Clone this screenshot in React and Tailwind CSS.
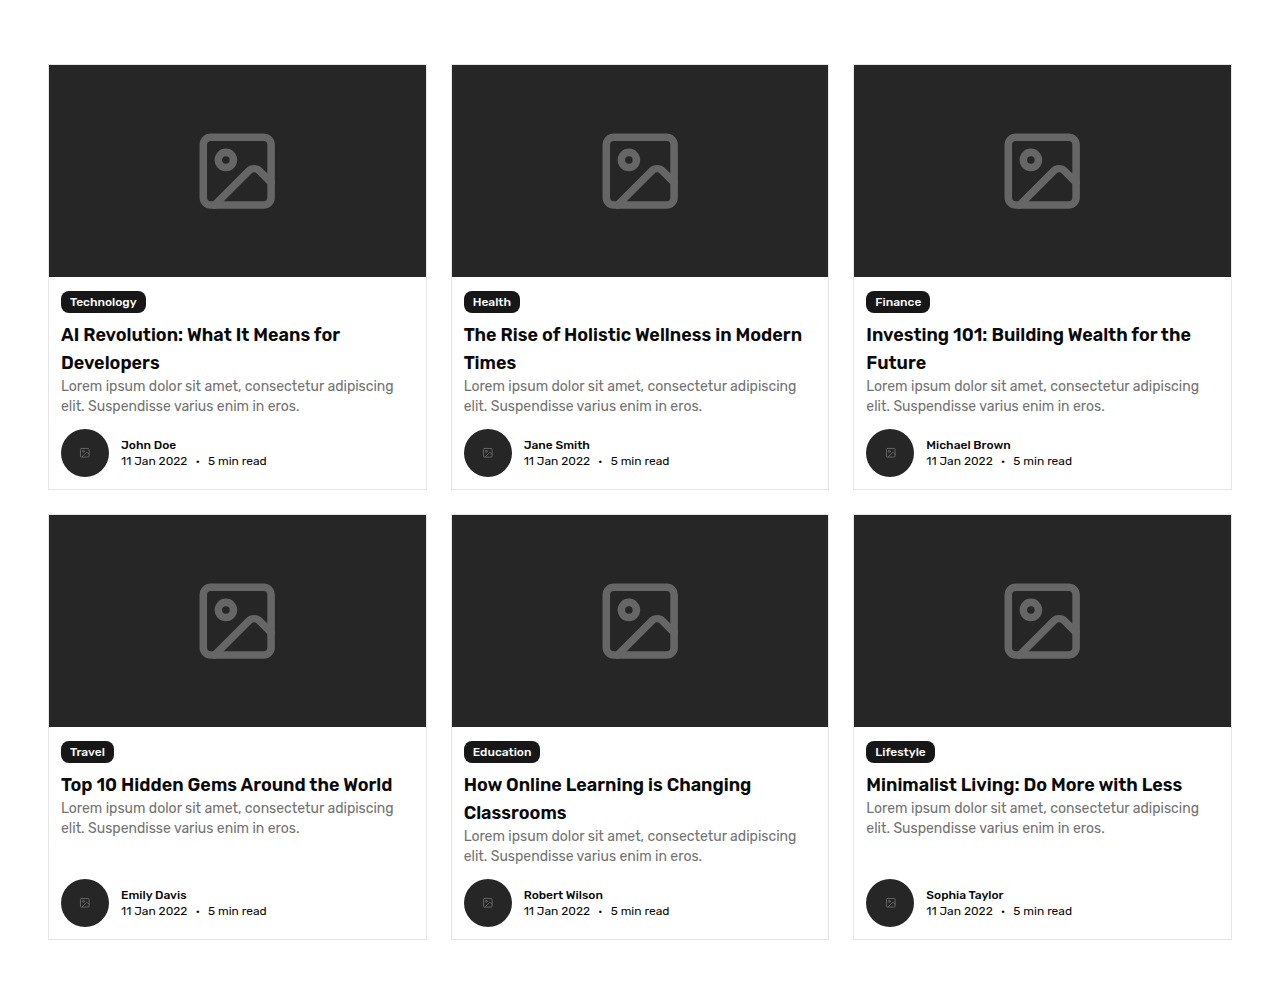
import React from "react";

const posts = [
  { category: "Technology", title: "AI Revolution: What It Means for Developers", author: "John Doe" },
  { category: "Health", title: "The Rise of Holistic Wellness in Modern Times", author: "Jane Smith" },
  { category: "Finance", title: "Investing 101: Building Wealth for the Future", author: "Michael Brown" },
  { category: "Travel", title: "Top 10 Hidden Gems Around the World", author: "Emily Davis" },
  { category: "Education", title: "How Online Learning is Changing Classrooms", author: "Robert Wilson" },
  { category: "Lifestyle", title: "Minimalist Living: Do More with Less", author: "Sophia Taylor" },
];

function PictureIcon() {
  return (
    <svg
      viewBox="0 0 24 24"
      fill="none"
      stroke="#666666"
      strokeWidth="2"
      strokeLinecap="round"
      strokeLinejoin="round"
      className="w-[24%]"
      aria-hidden="true"
    >
      <rect x="3" y="3" width="18" height="18" rx="2" ry="2" />
      <circle cx="9" cy="9" r="2" />
      <path d="m21 15-3.086-3.086a2 2 0 0 0-2.828 0L6 21" />
    </svg>
  );
}

function PostCard({ post }) {
  return (
    <article className="flex flex-col border border-neutral-200">
      <div className="flex aspect-video w-full items-center justify-center bg-[#262626]">
        <PictureIcon />
      </div>
      <div className="flex flex-1 flex-col justify-between gap-3 p-3">
        <div>
          <div className="mb-2 flex h-6 items-end">
            <span className="rounded-lg border border-transparent bg-neutral-900 px-2 py-0.5 text-xs font-medium text-neutral-50">
              {post.category}
            </span>
          </div>
          <h2 className="text-lg leading-7 font-semibold">{post.title}</h2>
          <p className="text-sm leading-5 text-neutral-500">
            Lorem ipsum dolor sit amet, consectetur adipiscing elit. Suspendisse varius enim in eros.
          </p>
        </div>
        <div className="flex items-center gap-3">
          <div className="flex size-12 items-center justify-center rounded-full bg-[#262626]">
            <PictureIcon />
          </div>
          <div className="text-xs leading-4">
            <p className="font-medium">{post.author}</p>
            <div className="flex items-center gap-2">
              <span>11 Jan 2022</span>
              <span>•</span>
              <span>5 min read</span>
            </div>
          </div>
        </div>
      </div>
    </article>
  );
}

export default function App() {
  return (
    <main className="bg-white px-12 py-16 font-['Rubik','Inter',sans-serif] text-neutral-950">
      <div className="grid grid-cols-3 gap-6">
        {posts.map((post) => (
          <PostCard key={post.title} post={post} />
        ))}
      </div>
    </main>
  );
}
